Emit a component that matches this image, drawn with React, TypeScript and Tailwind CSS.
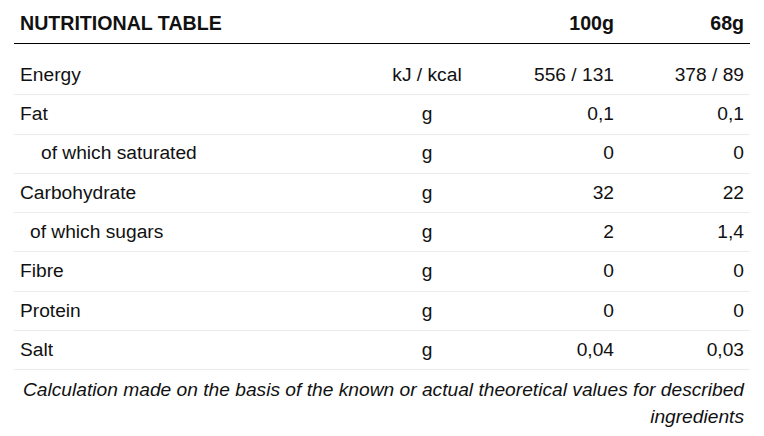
const ROWS = [
  { label: 'Energy', indent: 'pl-[6px]', unit: 'kJ / kcal', per100: '556 / 131', perServing: '378 / 89' },
  { label: 'Fat', indent: 'pl-[6px]', unit: 'g', per100: '0,1', perServing: '0,1' },
  { label: 'of which saturated', indent: 'pl-[27px]', unit: 'g', per100: '0', perServing: '0' },
  { label: 'Carbohydrate', indent: 'pl-[6px]', unit: 'g', per100: '32', perServing: '22' },
  { label: 'of which sugars', indent: 'pl-[16px]', unit: 'g', per100: '2', perServing: '1,4' },
  { label: 'Fibre', indent: 'pl-[6px]', unit: 'g', per100: '0', perServing: '0' },
  { label: 'Protein', indent: 'pl-[6px]', unit: 'g', per100: '0', perServing: '0' },
  { label: 'Salt', indent: 'pl-[6px]', unit: 'g', per100: '0,04', perServing: '0,03' },
];

const cols = 'grid grid-cols-[356px_114px_136px_130px]';

export default function App() {
  return (
    <div className="w-[764px] h-[436px] bg-white px-[14px] text-[#111] font-['Liberation_Sans',Arial,sans-serif]">
      <div className="w-[736px]">
        {/* header */}
        <div className={`${cols} h-[44px] items-center pt-[5px] border-b border-black text-[19.6px] font-bold`}>
          <span className="px-[6px]">NUTRITIONAL TABLE</span>
          <span />
          <span className="px-[6px] text-right">100g</span>
          <span className="px-[6px] text-right">68g</span>
        </div>

        <div className="pt-[12px]">
          {ROWS.map((row) => (
            <div key={row.label} className={`${cols} h-[39.3px] items-center border-b border-[#ececec] text-[19.2px]`}>
              <span className={`pr-[6px] ${row.indent}`}>{row.label}</span>
              <span className="text-center">{row.unit}</span>
              <span className="px-[6px] text-right">{row.per100}</span>
              <span className="px-[6px] text-right">{row.perServing}</span>
            </div>
          ))}
        </div>

        <p className="pt-[6px] px-[6px] text-right italic text-[19.2px] leading-[27px]">
          Calculation made on the basis of the known or actual theoretical values for described
          <br />
          ingredients
        </p>
      </div>
    </div>
  );
}
